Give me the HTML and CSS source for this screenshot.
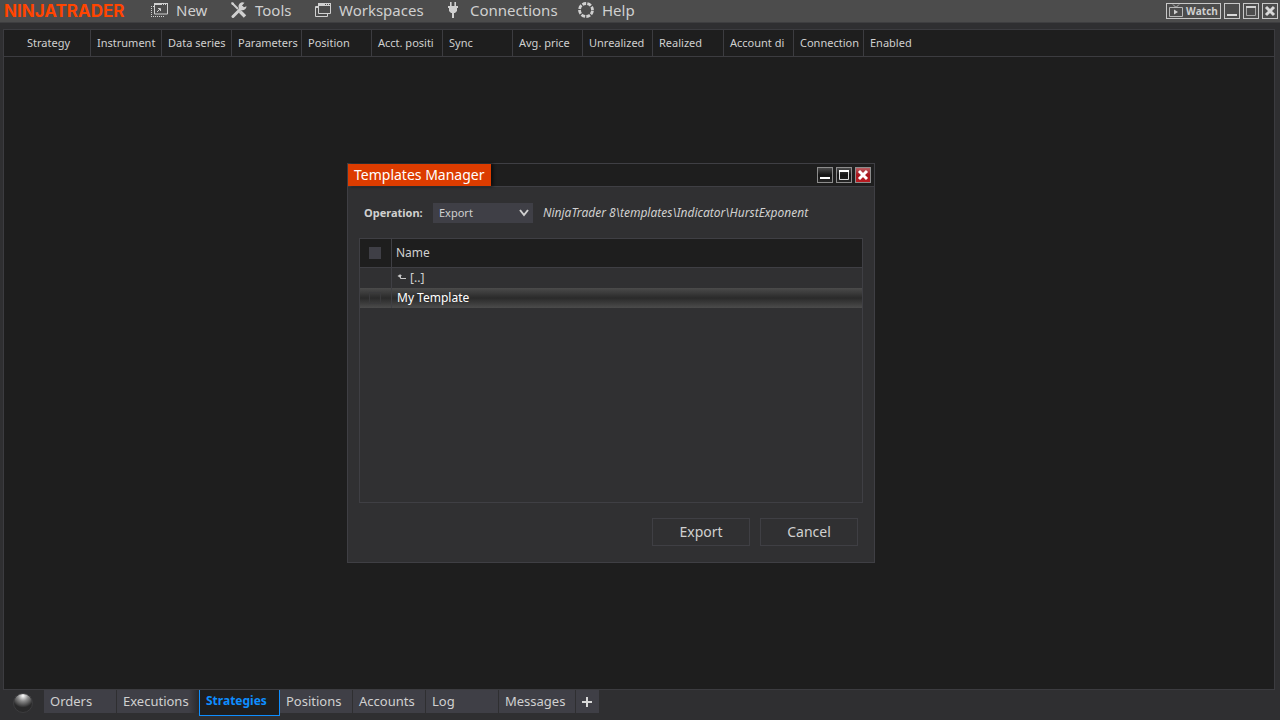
FILE: index.html
```html
<!DOCTYPE html>
<html lang="en">
<head>
    <meta charset="UTF-8">
    <meta name="viewport" content="width=device-width, initial-scale=1.0">
    <title>NinjaTrader - Control Center</title>
    <link rel="stylesheet" href="styles.css">
</head>
<body>
    <div class="app">
        <!-- Main menu -->
        <header class="menu-bar">
            <div class="logo">NINJATRADER</div>
            <nav class="menu">
                <button class="menu-item item-new">
                    <svg width="17" height="16" viewBox="0 0 17 16" fill="none" stroke="#d0d0d0">
                        <path d="M3.500 1v11h13V1"/>
                        <path d="M3 2h14" stroke-width="2"/>
                        <path d="M11 2.500h1M13 2.500h1M15 2.500h1" stroke="#4d4d4d"/>
                        <path d="M6 10l3-3M7 6.500h2.500V9"/>
                        <path d="M0.500 4v11M0 14.500h13" stroke-dasharray="1 1"/>
                        <path d="M0 4.500h3" stroke-dasharray="1 1"/>
                    </svg>
                    New
                </button>
                <button class="menu-item item-tools">
                    <svg width="16" height="16" viewBox="0 0 16 16">
                        <path d="M1.500 1.500l5.500 5.500" stroke="#d0d0d0" stroke-width="2"/>
                        <path d="M9 9.500l5 5" stroke="#d0d0d0" stroke-width="3.400"/>
                        <path d="M2 14.500l9-9" stroke="#d0d0d0" stroke-width="3" stroke-linecap="round"/>
                        <path d="M13.500 0.800A4 4 0 1 0 15.500 4.300l-2.600 1-1.900-1.800z" fill="#d0d0d0"/>
                        <path d="M0 1l1-1 2 1v2H1z" fill="#d0d0d0"/>
                    </svg>
                    Tools
                </button>
                <button class="menu-item item-workspaces">
                    <svg width="16" height="14" viewBox="0 0 16 14" fill="none" stroke="#d0d0d0">
                        <path d="M3.500 0.500h12v10h-12z"/>
                        <path d="M3 1.500h13" stroke-width="3"/>
                        <path d="M10 1.500h1M12 1.500h1M14 1.500h1" stroke="#4d4d4d"/>
                        <path d="M3 3.500H0.500v10h12V11M0 4.500h4"/>
                    </svg>
                    Workspaces
                </button>
                <button class="menu-item item-connections">
                    <svg width="10" height="16" viewBox="0 0 10 16" fill="#d0d0d0">
                        <path d="M2 0h1.600v4h2.800V0H8v4h2v2H9v3L7 11H6v5H4v-5H3L1 9V6H0V4h2z"/>
                    </svg>
                    Connections
                </button>
                <button class="menu-item item-help">
                    <svg width="16" height="16" viewBox="0 0 16 16" fill="none" stroke="#d0d0d0">
                        <circle cx="8" cy="8" r="6.500" stroke-width="2.800" stroke-dasharray="3.900 1.205" stroke-dashoffset="-0.600"/>
                    </svg>
                    Help
                </button>
            </nav>
            <div class="window-buttons">
                <button class="watch">
                    <svg width="14" height="14" viewBox="0 0 14 14" fill="none" stroke="#b8b8b8">
                        <path d="M0.500 3.500h13v9h-13z"/>
                        <path d="M4 0.500l2.500 2.500h1L10 0.500"/>
                        <path d="M5 5.500v5l4-2.500z" fill="#d0d0d0" stroke="none"/>
                    </svg>
                    Watch
                </button>
                <button class="frame-btn" aria-label="Minimize">
                    <svg width="14" height="14" viewBox="0 0 14 14"><path d="M2 10h10v2H2z" fill="#d8d8d8"/></svg>
                </button>
                <button class="frame-btn" aria-label="Maximize">
                    <svg width="14" height="14" viewBox="0 0 14 14"><path d="M2.500 2.500h9v9h-9zM2 3.500h10" fill="none" stroke="#a8a8a8"/><path d="M2 2h10v2H2z" fill="#d0d0d0"/></svg>
                </button>
                <button class="frame-btn" aria-label="Close">
                    <svg width="14" height="14" viewBox="0 0 14 14"><path d="M3 3l8 8M11 3l-8 8" stroke="#d8d8d8" stroke-width="3"/></svg>
                </button>
            </div>
        </header>

        <!-- Strategies grid -->
        <main class="grid-panel">
            <table class="grid">
                <thead>
                    <tr>
                        <th class="col-strategy">Strategy</th>
                        <th>Instrument</th>
                        <th>Data series</th>
                        <th>Parameters</th>
                        <th>Position</th>
                        <th>Acct. positi</th>
                        <th>Sync</th>
                        <th>Avg. price</th>
                        <th>Unrealized</th>
                        <th>Realized</th>
                        <th>Account di</th>
                        <th>Connection</th>
                        <th class="col-last">Enabled</th>
                    </tr>
                </thead>
            </table>
        </main>

        <!-- Bottom tabs -->
        <footer class="tab-bar">
            <svg class="status-ball" width="22" height="22" viewBox="0 0 22 22">
                <defs>
                    <radialGradient id="ball" cx="50%" cy="12%" r="62%">
                        <stop offset="0" stop-color="#ffffff"/>
                        <stop offset="0.450" stop-color="#8c8c8c"/>
                        <stop offset="1" stop-color="#29292a"/>
                    </radialGradient>
                </defs>
                <circle cx="11" cy="11" r="9.500" fill="url(#ball)" stroke="#3c3c3e"/>
            </svg>
            <nav class="tabs">
                <button class="tab">Orders</button>
                <button class="tab tab-executions">Executions</button>
                <button class="tab active">Strategies</button>
                <button class="tab">Positions</button>
                <button class="tab">Accounts</button>
                <button class="tab">Log</button>
                <button class="tab tab-messages">Messages</button>
                <button class="tab tab-add" aria-label="Add tab">
                    <svg width="10" height="10" viewBox="0 0 10 10"><path d="M4 0h2v4h4v2H6v4H4V6H0V4h4z" fill="#d8d8d8"/></svg>
                </button>
            </nav>
        </footer>

        <!-- Templates Manager dialog -->
        <section class="dialog" role="dialog" aria-labelledby="dialog-title">
            <div class="dialog-header">
                <h1 class="dialog-title" id="dialog-title">Templates Manager</h1>
                <div class="dialog-buttons">
                    <button class="dialog-btn" aria-label="Minimize">
                        <svg width="14" height="14" viewBox="0 0 14 14"><path d="M2 9h10v2H2z" fill="#fff"/></svg>
                    </button>
                    <button class="dialog-btn" aria-label="Maximize">
                        <svg width="14" height="14" viewBox="0 0 14 14"><path d="M2.500 2.500h9v9h-9z" fill="none" stroke="#ddd"/><path d="M2 2h10v2H2z" fill="#fff"/></svg>
                    </button>
                    <button class="dialog-btn dialog-close" aria-label="Close">
                        <svg width="14" height="14" viewBox="0 0 14 14"><path d="M3 3l8 8M11 3l-8 8" stroke="#fff" stroke-width="3"/></svg>
                    </button>
                </div>
            </div>
            <div class="dialog-body">
                <div class="operation-row">
                    <label class="operation-label" for="operation">Operation:</label>
                    <select class="operation-select" id="operation">
                        <option>Export</option>
                        <option>Import</option>
                    </select>
                    <span class="path">NinjaTrader 8\templates\Indicator\HurstExponent</span>
                </div>
                <div class="template-list">
                    <table class="templates">
                        <thead>
                            <tr>
                                <th class="check-cell"><input type="checkbox" class="check" aria-label="Select all"></th>
                                <th>Name</th>
                            </tr>
                        </thead>
                        <tbody>
                            <tr>
                                <td class="check-cell"></td>
                                <td>
                                    <svg width="10" height="8" viewBox="0 0 10 8" fill="none" stroke="#c8c8c8"><path d="M2 1.500h2.500M3.500 2v2.500H9"/><path d="M0.500 2L3.500 0v4z" fill="#c8c8c8" stroke="none"/></svg>
                                    [..]
                                </td>
                            </tr>
                            <tr class="selected">
                                <td class="check-cell"><input type="checkbox" class="check" aria-label="My Template"></td>
                                <td>My Template</td>
                            </tr>
                        </tbody>
                    </table>
                </div>
                <div class="dialog-actions">
                    <button class="action-btn">Export</button>
                    <button class="action-btn">Cancel</button>
                </div>
            </div>
        </section>
    </div>
</body>
</html>
```
FILE: styles.css
```css
* {
    box-sizing: border-box;
}
body {
    margin: 0;
    background: #2f2f31;
    color: #d0d0d0;
    font-family: "Noto Sans", "Open Sans", sans-serif;
    font-size: 12px;
    line-height: 16px;
}
button {
    margin: 0;
    padding: 0;
    border: none;
    background: none;
    color: inherit;
    font: inherit;
}
svg {
    display: block;
    flex: none;
}
.app {
    position: relative;
    display: flex;
    flex-direction: column;
    min-height: 100vh;
}

/* menu */
.menu-bar {
    display: flex;
    align-items: center;
    height: 23px;
    padding: 0 2px 0 4px;
    background: #4c4c4c;
    border-bottom: 1px solid #3e3e40;
}
.logo {
    width: 147px;
    color: #ff4500;
    font-family: Inter, sans-serif;
    font-size: 17px;
    font-weight: 700;
    line-height: 22px;
}
.menu {
    display: flex;
    flex: 1;
}
.menu-item {
    display: flex;
    align-items: center;
    gap: 8px;
    padding-bottom: 2px;
    font-size: 15px;
    line-height: 20px;
    white-space: nowrap;
}
.item-new {
    width: 80px;
}
.item-tools {
    width: 84px;
}
.item-workspaces {
    width: 133px;
}
.item-connections {
    width: 130px;
    gap: 12px;
}
.window-buttons {
    display: flex;
    gap: 3px;
}
.watch,
.frame-btn {
    display: flex;
    align-items: center;
    justify-content: center;
    width: 16px;
    height: 16px;
    border: 1px solid #c8c8c8;
}
.watch {
    gap: 3px;
    width: 55px;
    font-family: "Open Sans", sans-serif;
    font-size: 10px;
    font-weight: 700;
}

/* grid */
.grid-panel {
    flex: 1;
    margin: 6px 5px 0 3px;
    border: 1px solid #3c3c40;
    background: #1e1e1e;
}
.grid {
    width: 100%;
    table-layout: fixed;
    border-collapse: separate;
    border-spacing: 0;
}
.grid th {
    width: 70px;
    height: 27px;
    padding: 0 0 0 7px;
    overflow: hidden;
    border-bottom: 1px solid #3c3c40;
    box-shadow: inset 1px 0 #3c3c40;
    font-size: 11px;
    font-weight: 400;
    text-align: left;
    white-space: nowrap;
}
.grid th:nth-child(4n+2) {
    width: 71px;
}
.grid .col-strategy {
    width: 86px;
    padding-left: 23px;
    box-shadow: none;
}
.grid .col-last {
    width: auto;
}

/* tabs */
.tab-bar {
    display: flex;
    align-items: flex-start;
    height: 30px;
    padding-left: 12px;
}
.status-ball {
    margin: 2px 10px 0 0;
}
.tabs {
    display: flex;
    align-items: flex-start;
}
.tab {
    width: 72px;
    height: 23px;
    margin-right: 1px;
    padding: 0 6px 2px;
    background: #3f3f46;
    font-size: 13px;
    text-align: left;
    white-space: nowrap;
}
.tab-executions {
    width: 82px;
    margin-right: 0;
    background: linear-gradient(to right, #3f3f46 72px, #29292c 82px);
}
.tab.active {
    width: 81px;
    height: 26px;
    margin-right: 0;
    padding-bottom: 3px;
    border: 1px solid #0e8eff;
    border-top: none;
    background: #1e1e1e;
    color: #0e8eff;
    font-size: 12px;
    font-weight: 700;
}
.tab-messages {
    width: 76px;
}
.tab-add {
    display: flex;
    align-items: center;
    width: 23px;
    padding: 0 6px;
}

/* dialog */
.dialog {
    position: absolute;
    top: 163px;
    left: 347px;
    width: 528px;
    border: 1px solid #3f3f44;
    background: #303032;
}
.dialog-header {
    display: flex;
    align-items: center;
    justify-content: space-between;
    height: 23px;
    padding-right: 3px;
    border-bottom: 1px solid #3f3f44;
    background: #1e1e1e;
}
.dialog-title {
    margin: 0;
    padding: 0 6px;
    background: #dc3c00;
    box-shadow: 2px 0 3px #0c0c0c;
    color: #fff;
    font-size: 14px;
    font-weight: 400;
    line-height: 22px;
}
.dialog-buttons {
    display: flex;
    gap: 3px;
}
.dialog-btn {
    width: 16px;
    height: 16px;
    border: 1px solid #8c8c8c;
    background: linear-gradient(#4a4a4a, #141414 50%, #262626);
}
.dialog-close {
    background: linear-gradient(#b85c60, #a8161c 50%, #b81c22);
}
.dialog-body {
    padding: 16px 11px;
}
.operation-row {
    display: flex;
    align-items: center;
    height: 20px;
    padding-left: 5px;
}
.operation-label {
    width: 69px;
    font-size: 11px;
    font-weight: 700;
}
.operation-select {
    width: 100px;
    height: 20px;
    margin-right: 10px;
    padding: 0 6px;
    border: none;
    appearance: none;
    background: #3f3f46 url("data:image/svg+xml,%3Csvg xmlns='http://www.w3.org/2000/svg' width='10' height='8'%3E%3Cpath d='M1 1l4 5 4-5' fill='none' stroke='%23d0d0d0' stroke-width='2'/%3E%3C/svg%3E") no-repeat right 4px center;
    color: inherit;
    font: inherit;
    font-size: 11px;
}
.path {
    font-style: italic;
}
.template-list {
    height: 265px;
    margin-top: 15px;
    border: 1px solid #3f3f44;
}
.templates {
    width: 100%;
    border-collapse: separate;
    border-spacing: 0;
}
.templates th,
.templates td {
    height: 20px;
    padding: 0 5px;
    text-align: left;
}
.templates th {
    height: 29px;
    padding-left: 4px;
    border-bottom: 1px solid #3f3f44;
    background: #1e1e1e;
    font-weight: 400;
}
.templates .check-cell {
    width: 32px;
    padding: 0 0 0 9px;
    border-right: 1px solid #3f3f44;
}
.templates td svg {
    display: inline-block;
}
.check {
    display: block;
    width: 12px;
    height: 12px;
    margin: 0;
    appearance: none;
    background: #3f3f46;
}
.selected {
    background: linear-gradient(#4b4b4b, #2a2a2a 50%, #4b4b4b);
    color: #fff;
}
.selected .check {
    border: 1px solid #3a3a3c;
    background: none;
}
.dialog-actions {
    display: flex;
    justify-content: flex-end;
    gap: 10px;
    margin-top: 15px;
    padding-right: 5px;
}
.action-btn {
    width: 98px;
    height: 28px;
    border: 1px solid #3f3f44;
    font-size: 14px;
}
```
